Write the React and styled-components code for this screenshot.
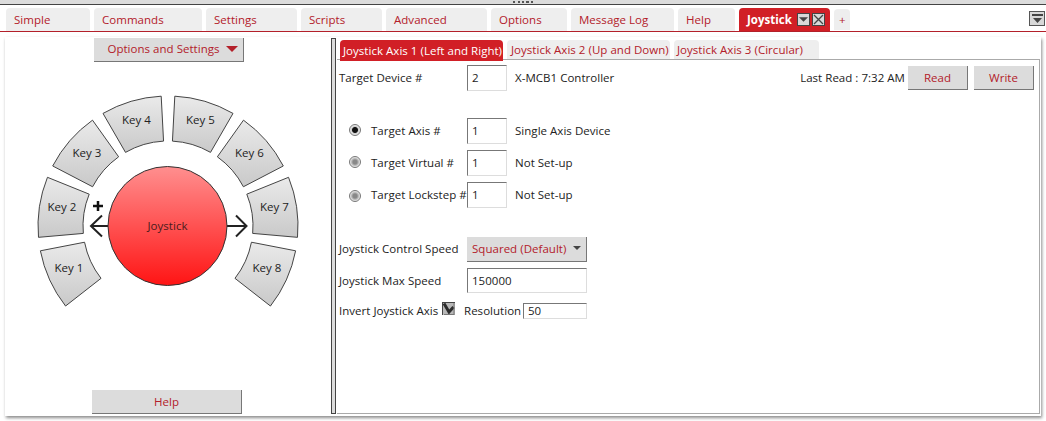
import React from "react";
import styled, { createGlobalStyle } from "styled-components";

const Global = createGlobalStyle`
  html, body { margin: 0; padding: 0; background: #fff; }
  body { font-family: "Open Sans", "Noto Sans", sans-serif; font-size: 11.5px; letter-spacing: 0.03px; color: #222; }
  * { box-sizing: border-box; }
`;

const RED = "#b3202a";

const Page = styled.div`
  width: 1046px;
  height: 421px;
  overflow: hidden;
  display: flex;
  flex-direction: column;
`;
const Grip = styled.div`
  height: 5px;
  background: #dcdcdc;
  border-bottom: 1px solid #444;
  display: flex;
  justify-content: center;
`;
const GripDots = styled.span`
  width: 20px;
  height: 2px;
  margin-top: 1px;
  background: repeating-linear-gradient(90deg, #555 0 2px, transparent 2px 4.5px);
`;
const TabStrip = styled.div`
  height: 27px;
  padding: 3px 0 0 6px;
  display: flex;
  gap: 4px;
  border-bottom: 1px solid ${RED};
  position: relative;
`;
const Tab = styled.div`
  width: ${(p) => p.$w}px;
  height: ${(p) => (p.$small ? 21 : 23)}px;
  margin-top: ${(p) => (p.$small ? 1 : 0)}px;
  padding-left: ${(p) => p.$pad ?? 8}px;
  padding-right: ${(p) => (p.$active ? 5 : 0)}px;
  background: ${(p) => (p.$active ? "#d11f26" : "#eeeeee")};
  color: ${(p) => (p.$active ? "#fff" : RED)};
  font-weight: ${(p) => (p.$active ? 700 : 400)};
  border-radius: 4px 4px 0 0;
  display: flex;
  align-items: center;
  white-space: nowrap;
`;
const TabBtn = styled.span`
  width: 13px;
  height: 13px;
  margin-left: ${(p) => (p.$first ? "auto" : "2px")};
  background: #d8d8d8;
  border: 1px solid #444;
  display: flex;
  align-items: center;
  justify-content: center;
`;
const CornerBtn = styled.div`
  position: absolute;
  left: 1029px;
  top: 6px;
  width: 16px;
  height: 15px;
  background: #d8d8d8;
  border: 1px solid #555;
  display: flex;
  align-items: center;
  justify-content: center;
`;
const Panel = styled.div`
  width: 1036px;
  height: 379px;
  margin: 5px 0 0 5px;
  background: #fff;
  box-shadow: 1px 2px 3px rgba(0, 0, 0, 0.45);
  display: flex;
  padding-bottom: 2px;
`;
const LeftPane = styled.div`
  width: 326px;
  display: flex;
  flex-direction: column;
  align-items: center;
  padding-top: 1px;
`;
const Button = styled.div`
  width: ${(p) => p.$w}px;
  height: ${(p) => p.$h ?? 24}px;
  margin: ${(p) => p.$m ?? "0"};
  padding: ${(p) => p.$p ?? "0"};
  background: #dcdcdc;
  color: ${RED};
  border-right: 1px solid #777;
  border-bottom: 1px solid #777;
  display: flex;
  align-items: center;
  justify-content: center;
  gap: 6px;
  flex: none;
`;
const WheelWrap = styled.div`
  width: 326px;
  height: 328px;
  flex: none;
`;
const Splitter = styled.div`
  width: 5px;
  margin-top: 1px;
  background: #dcdcdc;
  border: 1px solid #444;
  flex: none;
`;
const RightPane = styled.div`
  flex: 1;
  padding: 3px 1px 0 1px;
  display: flex;
  flex-direction: column;
`;
const SubTabs = styled.div`
  display: flex;
  height: 19px;
  padding-left: 3px;
  gap: 4px;
  flex: none;
  position: relative;
  z-index: 1;
`;
const SubTab = styled.div`
  width: ${(p) => p.$w}px;
  height: ${(p) => (p.$active ? 21 : 19)}px;
  background: ${(p) => (p.$active ? "#d11f26" : "#eeeeee")};
  color: ${(p) => (p.$active ? "#fff" : RED)};
  border-radius: 4px 4px 0 0;
  padding-left: ${(p) => p.$pad}px;
  line-height: ${(p) => (p.$active ? 21 : 19)}px;
  white-space: nowrap;
`;
const Content = styled.div`
  flex: 1;
  border: 1px solid #aaa;
  border-left-width: 0;
  padding: 5px 0 0 2px;
  display: flex;
  flex-direction: column;
`;
const Row = styled.div`
  --up: ${(p) => p.$up ?? 2}px;
  display: flex;
  align-items: center;
  height: ${(p) => p.$h}px;
  margin-top: ${(p) => p.$mt ?? 0}px;
  flex: none;
`;
const Label = styled.span`
  width: ${(p) => p.$w}px;
  padding-bottom: var(--up);
  flex: none;
  white-space: nowrap;
`;
const Field = styled.div`
  width: ${(p) => p.$w}px;
  height: ${(p) => p.$h}px;
  flex: none;
  border: 1px solid #ddd;
  border-left-color: #777;
  border-top-color: #777;
  padding: 0 0 var(--up) 4px;
  display: flex;
  align-items: center;
  background: #fff;
`;
const Info = styled.span`
  margin-left: 8px;
  padding-bottom: var(--up);
  white-space: nowrap;
`;
const LastRead = styled.span`
  padding-bottom: var(--up);
  white-space: nowrap;
`;
const Radio = styled.span`
  width: 12px;
  height: 12px;
  border-radius: 50%;
  flex: none;
  margin: ${(p) => p.$dy ?? 0}px 10px 0 10px;
  border: 1px solid #777;
  background: ${(p) =>
    p.$on
      ? "radial-gradient(circle, #111 0 2.5px, #cfcfcf 3.5px, #eee 5px)"
      : "radial-gradient(circle, #888 0 2px, #bbb 3.5px, #eee 5px)"};
`;
const Spacer = styled.div`
  flex: 1;
`;
const Select = styled.div`
  width: 120px;
  height: 25px;
  background: #dcdcdc;
  color: ${RED};
  border-right: 1px solid #777;
  border-bottom: 1px solid #777;
  padding: 0 5px var(--up);
  display: flex;
  align-items: center;
  justify-content: space-between;
`;
const ResLabel = styled.span`
  width: 59px;
  margin-left: 9px;
  padding-bottom: var(--up);
  flex: none;
  white-space: nowrap;
`;
const InvertIcon = styled.svg`
  flex: none;
  margin-top: -5px;
`;

const CX = 168;
const CY = 226;
const OX = 5;
const OY = 62;
const R1 = 85;
const R2 = 130;
const polar = (r, deg) => {
  const a = (deg * Math.PI) / 180;
  return [CX - OX + r * Math.sin(a), CY - OY - r * Math.cos(a)];
};
const sector = (a, b) => {
  const [x1, y1] = polar(R2, a);
  const [x2, y2] = polar(R2, b);
  const [x3, y3] = polar(R1, b);
  const [x4, y4] = polar(R1, a);
  return `M${x1} ${y1}A${R2} ${R2} 0 0 1 ${x2} ${y2}L${x3} ${y3}A${R1} ${R1} 0 0 0 ${x4} ${y4}Z`;
};
const KEYS = [
  { n: "Key 1", c: -114.5, tx: 69, ty: 269 },
  { n: "Key 2", c: -81.5, tx: 62, ty: 208 },
  { n: "Key 3", c: -49, tx: 87, ty: 154 },
  { n: "Key 4", c: -16.5, tx: 136.5, ty: 121 },
  { n: "Key 5", c: 16.5, tx: 200.5, ty: 121 },
  { n: "Key 6", c: 49, tx: 249.5, ty: 154 },
  { n: "Key 7", c: 81.5, tx: 274.5, ty: 208 },
  { n: "Key 8", c: 114.5, tx: 267, ty: 269 },
];

const ax = CY - OY;
const Wheel = () => (
  <svg width="326" height="328" viewBox="0 0 326 328" fontFamily="Open Sans, Noto Sans, sans-serif" fontSize="11.5">
    <defs>
      <linearGradient id="keyG" x1="0" y1="0" x2="0" y2="1">
        <stop offset="0" stopColor="#eaeaea" />
        <stop offset="1" stopColor="#c9c9c9" />
      </linearGradient>
      <linearGradient id="joyG" x1="0" y1="0" x2="0" y2="1">
        <stop offset="0" stopColor="#ff8f8f" />
        <stop offset="1" stopColor="#ff1414" />
      </linearGradient>
    </defs>
    {KEYS.map((k) => (
      <g key={k.n}>
        <path d={sector(k.c - 13.5, k.c + 13.5)} fill="url(#keyG)" stroke="#444" strokeWidth="1" />
        <text x={k.tx - OX} y={k.ty - OY} textAnchor="middle" fill="#222" dominantBaseline="middle">{k.n}</text>
      </g>
    ))}
    <g fill="none" stroke="#222" strokeWidth="2">
      <path d={`M${91 - OX} ${ax}H${108 - OX}M${102 - OX} ${ax - 10.5}L${91 - OX} ${ax}L${102 - OX} ${ax + 10.5}`} />
      <path d={`M${227 - OX} ${ax}H${246 - OX}M${236 - OX} ${ax - 10.5}L${246.5 - OX} ${ax}L${236 - OX} ${ax + 10.5}`} />
      <path d={`M${93 - OX} ${206 - OY}H${103 - OX}M${98 - OX} ${201 - OY}V${211 - OY}`} stroke="#111" strokeWidth="2.5" />
    </g>
    <circle cx={167.5 - OX} cy={ax} r="59.5" fill="url(#joyG)" stroke="#333" />
    <text x={167.5 - OX} y={ax + 1} textAnchor="middle" dominantBaseline="middle" fill="#4a1c1c">Joystick</text>
  </svg>
);

const Caret = ({ w = 9, h = 5, c = "#444" }) => (
  <svg width={w} height={h} viewBox="0 0 10 5"><path d="M0 0H10L5 5Z" fill={c} /></svg>
);

const TABS = [
  ["Simple", 84], ["Commands", 108], ["Settings", 91], ["Scripts", 81],
  ["Advanced", 101], ["Options", 76], ["Message Log", 103], ["Help", 57],
];

export default function App() {
  return (
    <Page>
      <Global />
      <Grip><GripDots /></Grip>
      <TabStrip>
        {TABS.map(([t, w]) => <Tab key={t} $w={w}>{t}</Tab>)}
        <Tab $w={91} $active>
          Joystick
          <TabBtn $first><Caret /></TabBtn>
          <TabBtn>
            <svg width="11" height="11" viewBox="0 0 11 11"><path d="M1 1L10 10M10 1L1 10" stroke="#444" strokeWidth="1.3" /></svg>
          </TabBtn>
        </Tab>
        <Tab $w={16} $pad={5} $small>+</Tab>
        <CornerBtn>
          <svg width="11" height="9" viewBox="0 0 11 9"><path d="M0 0H11V2H0ZM1 4H10L5.5 9Z" fill="#444" /></svg>
        </CornerBtn>
      </TabStrip>
      <Panel>
        <LeftPane>
          <Button $w={150} $m="0 0 0 2px" $p="0 0 2px 8px">Options and Settings <Caret w={12} h={6} c={RED} /></Button>
          <WheelWrap><Wheel /></WheelWrap>
          <Button $w={150} $m="0 2px 0 0">Help</Button>
        </LeftPane>
        <Splitter />
        <RightPane>
          <SubTabs>
            <SubTab $w={163} $pad={3} $active>Joystick Axis 1 (Left and Right)</SubTab>
            <SubTab $w={163} $pad={4}>Joystick Axis 2 (Up and Down)</SubTab>
            <SubTab $w={145} $pad={3}>Joystick Axis 3 (Circular)</SubTab>
          </SubTabs>
          <Content>
            <Row $h={26}>
              <Label $w={128}>Target Device #</Label>
              <Field $w={40} $h={26}>2</Field>
              <Info>X-MCB1 Controller</Info>
              <Spacer />
              <LastRead>Last Read : 7:32 AM</LastRead>
              <Button $w={60} $m="0 0 0 3px">Read</Button>
              <Button $w={60} $m="0 5px 0 6px">Write</Button>
            </Row>
            <Row $h={26} $mt={27}>
              <Radio $on $dy={-2} /><Label $w={96}>Target Axis #</Label>
              <Field $w={40} $h={26}>1</Field>
              <Info>Single Axis Device</Info>
            </Row>
            <Row $h={26} $mt={6}>
              <Radio $dy={-2} /><Label $w={96}>Target Virtual #</Label>
              <Field $w={40} $h={26}>1</Field>
              <Info>Not Set-up</Info>
            </Row>
            <Row $h={26} $mt={6}>
              <Radio $dy={2} /><Label $w={96}>Target Lockstep #</Label>
              <Field $w={40} $h={26}>1</Field>
              <Info>Not Set-up</Info>
            </Row>
            <Row $h={25} $mt={29}>
              <Label $w={128}>Joystick Control Speed</Label>
              <Select>Squared (Default) <Caret w={8} h={4} /></Select>
            </Row>
            <Row $h={25} $mt={6} $up={0}>
              <Label $w={128}>Joystick Max Speed</Label>
              <Field $w={120} $h={25}>150000</Field>
            </Row>
            <Row $h={16} $mt={10}>
              <Label $w={103}>Invert Joystick Axis</Label>
              <InvertIcon width="13" height="13" viewBox="0 0 13 13">
                <rect x="0" y="0" width="13" height="13" fill="#b8b8b8" />
                <path d="M0 0H13V1H1V13H0Z" fill="#444" />
                <path d="M2 1.5L7 10L11.5 5" fill="none" stroke="#2c2c2c" strokeWidth="3" />
                <path d="M12.5 1V13H2V12H11.5V1Z" fill="#777" />
              </InvertIcon>
              <ResLabel>Resolution</ResLabel>
              <Field $w={64} $h={16}>50</Field>
            </Row>
          </Content>
        </RightPane>
      </Panel>
    </Page>
  );
}
